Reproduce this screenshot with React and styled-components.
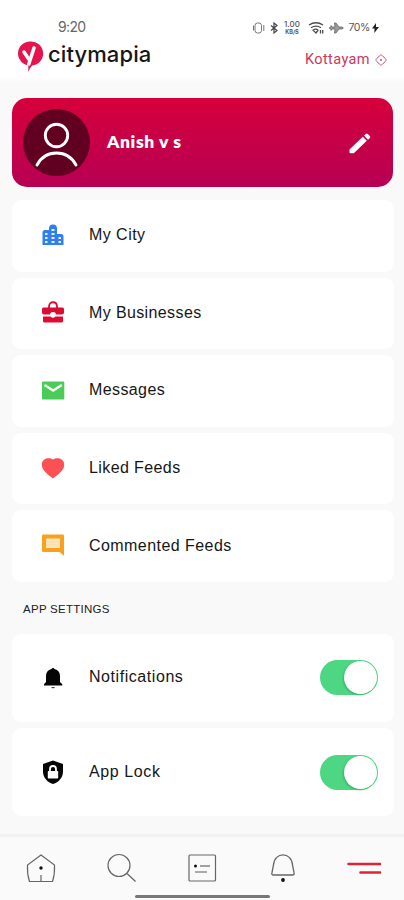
import React from "react";
import styled, { createGlobalStyle } from "styled-components";

const GlobalStyle = createGlobalStyle`
  * { box-sizing: border-box; }
  body { margin: 0; background: #f9f9f9; font-family: "Liberation Sans", Arial, sans-serif; color: #161616; }
  svg { display: block; overflow: visible; flex: none; }
`;

const Screen = styled.div`
  width: 404px;
  height: 900px;
  display: flex;
  flex-direction: column;
  background: #f9f9f9;
  overflow: hidden;
`;

const Header = styled.header`
  height: 83px;
  flex: none;
  background: linear-gradient(#fff 75px, #f9f9f9);
`;

const StatusBar = styled.div`
  height: 39px;
  padding: 16px 25px 0 58px;
  display: flex;
  justify-content: space-between;
`;

const Clock = styled.span`
  font: 14px/22px Inter, sans-serif;
  letter-spacing: -0.65px;
  color: #666;
`;

const StatusIcons = styled.div`
  height: 23px;
  display: flex;
  align-items: center;
`;

const NetSpeed = styled.div`
  width: 19px;
  margin: 0 7px 0 3px;
  display: flex;
  flex-direction: column;
  align-items: center;
  font-family: Inter, sans-serif;
  color: #555;
`;

const SpeedValue = styled.span`
  font-size: 8px;
  line-height: 10px;
  font-weight: 500;
`;

const SpeedUnit = styled.span`
  font-size: 5.5px;
  line-height: 7px;
  font-weight: 700;
`;

const Battery = styled.span`
  margin: 0 2px 0 3px;
  font: 10.5px/22px Inter, sans-serif;
  letter-spacing: -0.4px;
  color: #555;
`;

const BrandBar = styled.div`
  height: 38px;
  padding: 0 17px;
  display: flex;
  align-items: flex-start;
`;

const BrandName = styled.span`
  margin: 0 0 0 5px;
  font: 500 22px/30px Inter, sans-serif;
  letter-spacing: 0.1px;
  color: #171717;
`;

const Place = styled.div`
  margin-left: auto;
  padding-top: 11px;
  display: flex;
  align-items: center;
  gap: 5px;
  font: 14.5px/20px Roboto, sans-serif;
  letter-spacing: 0.4px;
  color: #c8385c;
`;

const Profile = styled.section`
  height: 89px;
  flex: none;
  margin: 15px 11px 0 12px;
  padding: 0 21px 0 11px;
  display: flex;
  align-items: center;
  border-radius: 15px;
  background: linear-gradient(#d6003b, #b70054);
`;

const Avatar = styled.div`
  width: 67px;
  height: 67px;
  border-radius: 50%;
  background: #610020;
`;

const UserName = styled.strong`
  flex: 1;
  margin: 0 0 2px 17px;
  font: 800 17.5px/22px Lato, sans-serif;
  letter-spacing: 0.6px;
  color: #fff;
`;

const List = styled.section`
  margin: ${(p) => p.$top}px 10px 0 12px;
  display: flex;
  flex-direction: column;
  gap: ${(p) => p.$gap}px;
`;

const Row = styled.div`
  height: ${(p) => p.$height}px;
  flex: none;
  padding: 0 16px 0 29px;
  display: flex;
  align-items: center;
  border-radius: 9px;
  background: #fff;
`;

const RowLabel = styled.span`
  flex: 1;
  margin: 0 0 1px 24px;
  font-size: 16px;
  line-height: 22px;
  letter-spacing: ${(p) => p.$spacing}px;
`;

const SectionTitle = styled.h2`
  margin: 19px 0 0 23px;
  height: 19px;
  font-size: 11.5px;
  line-height: 17px;
  font-weight: 400;
  letter-spacing: 0.27px;
  color: #222;
`;

const Toggle = styled.div`
  width: 58px;
  height: 35px;
  padding: 1px;
  display: flex;
  justify-content: flex-end;
  border-radius: 18px;
  background: #4dd783;
`;

const Knob = styled.div`
  width: 33px;
  height: 33px;
  border-radius: 50%;
  background: #fff;
  box-shadow: -1px 1px 2px #259e5499;
`;

const Footer = styled.footer`
  margin-top: auto;
  height: 66px;
  flex: none;
  border-top: 3px solid #f2f2f2;
  background: #fafafa;
`;

const Tabs = styled.nav`
  height: 57px;
  padding: 4px 22px 0 25px;
  display: flex;
  align-items: center;
  justify-content: space-between;
`;

const HomeBar = styled.div`
  width: 135px;
  height: 3px;
  margin: 1px 0 0 135px;
  border-radius: 2px;
  background: #777;
`;

const art = {
  city: (
    <g fill="#2f80ed">
      <path d="M1.500 21V8.500A2.500 2.500 0 0 1 4 6h4V4.500a4 4 0 0 1 8 0V10h4a2.500 2.500 0 0 1 2.500 2.500V21z" />
      <path fill="#e5f0ff" d="M4 9h2.500v2H4zm0 4h2.500v2H4zm0 4h2.500v2H4zm6.500-12h3v2h-3zm0 4h3v2h-3zm0 4h3v2h-3zm0 4h3v2h-3zM17.500 13H20v2h-2.500zm0 4H20v2h-2.500z" />
    </g>
  ),
  business: (
    <g fill="#db0b31">
      <path d="M8 7V5.500C8-.2 16-.2 16 5.500V7" fill="none" stroke="#db0b31" strokeWidth="1.800" />
      <path d="M2.500 6.500h19A1.500 1.500 0 0 1 23 8v3.500q0 2-2 2h-6a3 2.500 0 0 0-6 0H3q-2 0-2-2V8a1.500 1.500 0 0 1 1.500-1.500zM2 15.500h7.500q2.500 2.500 5 0H22v4.500a1.500 1.500 0 0 1-1.500 1.500h-17A1.500 1.500 0 0 1 2 20z" />
    </g>
  ),
  message: (
    <g>
      <rect x="1" y="2.500" width="22.300" height="18" rx="1" fill="#4bcb58" />
      <path d="m3.500 6 8.700 5.500L20.800 6" fill="none" stroke="#f3fff1" strokeWidth="2.400" />
    </g>
  ),
  heart: <path d="M12 21.500C7 17.500.8 13.200.8 7.700.8 1.100 8.600 0 12 2.500 15.400 0 23.200 1.100 23.200 7.700 23.200 13.200 17 17.500 12 21.500z" fill="#fd5054" />,
  comment: (
    <g>
      <path d="M2.300.5h19.400A1.300 1.300 0 0 1 23 1.800v20L18.500 18H2.300A1.300 1.300 0 0 1 1 16.700V1.800A1.300 1.300 0 0 1 2.300.5z" fill="#f7a11d" />
      <path d="M5 4.500h14V14H5z" fill="#ffe5bc" />
      <path d="M5 8h14M5 11h14" stroke="#f9d9a3" strokeWidth=".8" />
    </g>
  ),
  bell: (
    <g fill="#050505">
      <path d="M10.500 3a1.600 1.600 0 0 1 3 0c3.700 1 5.500 3.600 5.500 7v6l2.300 2.300V19.500H3v-1.200L5 16v-6c0-3.400 1.800-6 5.500-7z" />
      <path d="M10.200 21.200h3.800a2 1.600 0 0 1-3.800 0z" />
    </g>
  ),
  lock: (
    <g>
      <path d="M12 .5 22 4v7.500c0 6-4.300 10.800-10 12.500C6.300 22.300 2 17.500 2 11.500V4z" fill="#050505" />
      <rect x="6.800" y="11" width="10.400" height="7.500" rx=".7" fill="#fff" />
      <path d="M9 11.500V9a3 3 0 0 1 6 0v2.500" fill="none" stroke="#fff" strokeWidth="1.800" />
    </g>
  ),
};

const RowIcon = ({ name }) => (
  <svg width="24" height="24" viewBox="0 0 24 24">{art[name]}</svg>
);

const links = [
  ["city", "My City", 0.45],
  ["business", "My Businesses", 0.38],
  ["message", "Messages", 0.4],
  ["heart", "Liked Feeds", 0.4],
  ["comment", "Commented Feeds", 0.44],
];

const settings = [
  ["bell", "Notifications", 0.56],
  ["lock", "App Lock", 0.6],
];

const SystemIcons = () => (
  <StatusIcons>
    <svg width="13" height="14" viewBox="0 0 13 14" fill="none" stroke="#777">
      <rect x="2" y="2" width="6.500" height="10" rx="2.500" />
      <path d="M.5 4.500v5M10.800 4v6" />
    </svg>
    <svg width="13" height="12" viewBox="-4 0 13 12" fill="none" stroke="#444" strokeWidth="1.200">
      <path d="m1 3.500 6 5L4 11V1l3 2.500-6 5" />
    </svg>
    <NetSpeed>
      <SpeedValue>1.00</SpeedValue>
      <SpeedUnit>KB/S</SpeedUnit>
    </NetSpeed>
    <svg width="17" height="14" viewBox="0 0 17 14" fill="none" stroke="#4d4d4d" strokeWidth="1.300">
      <path d="M1 4q7-4.500 14 0M3 6.700q5-3 10 0M5 9.200q3-2 5 0L8 12zM12.500 9v3.500m2.200-3.500v3.500" />
    </svg>
    <svg width="20" height="14" viewBox="-4 0 20 14" fill="#999" stroke="#666" strokeWidth=".8">
      <path d="m2 4.500 1 1.500h3L5.500 2H7l3 4h3.500q1.500 1 0 2H10l-3 4H5.500L6 8H3L2 9.500V8L0 7l2-1z" />
    </svg>
    <Battery>70%</Battery>
    <svg width="7" height="10" viewBox="0 0 7 10" fill="#222"><path d="M4 0 0 5.500h2.500L2.300 10 7 4H4z" /></svg>
  </StatusIcons>
);

export default function App() {
  return (
    <>
      <GlobalStyle />
      <Screen>
        <Header>
          <StatusBar>
            <Clock>9:20</Clock>
            <SystemIcons />
          </StatusBar>
          <BrandBar>
            <svg width="26" height="34" viewBox="0 0 26 34">
              <path d="M13 2.500a12 12 0 0 0-12 12c0 5 3.200 9.500 8 11.200l2.300.7V33q1.700-4.500 3.800-6.400A12 12 0 1 0 13 2.500z" fill="#e5144f" />
              <path d="m7 13 4.500 6.700M17 9l-5.200 16" fill="none" stroke="#fff" strokeWidth="3.500" strokeLinecap="round" />
            </svg>
            <BrandName>citymapia</BrandName>
            <Place>
              Kottayam
              <svg width="12" height="12" viewBox="0 0 12 12" fill="none" stroke="#d0607c">
                <path d="M6 .5Q7 2 9 3q1 2 2.500 3Q10 7 9 9q-2 1-3 2.500Q5 10 3 9 2 7 .5 6 2 5 3 3q2-1 3-2.500z" />
                <circle cx="6" cy="6" r=".9" fill="#c8385c" stroke="none" />
              </svg>
            </Place>
          </BrandBar>
        </Header>

        <Profile>
          <Avatar>
            <svg width="67" height="67" viewBox="0 0 67 67" fill="none" stroke="#fff" strokeWidth="2.900" strokeLinecap="round">
              <circle cx="33.500" cy="26.500" r="11.200" />
              <path d="M14 56c8.500-16 30.500-16 39 0" />
            </svg>
          </Avatar>
          <UserName>Anish v s</UserName>
          <svg width="24" height="24" viewBox="0 0 24 24" fill="#fff">
            <path d="M1.500 18.500 14.800 5.700l4 4L5.800 22.200H2.500a1 1 0 0 1-1-1zM16 4.600l1.800-1.700a1.500 1.500 0 0 1 2 0L21.900 5a1.500 1.500 0 0 1 0 2L20 8.700z" />
          </svg>
        </Profile>

        <List $top={13} $gap={6.1}>
          {links.map(([icon, label, spacing]) => (
            <Row key={label} $height={71.5}>
              <RowIcon name={icon} />
              <RowLabel $spacing={spacing}>{label}</RowLabel>
            </Row>
          ))}
        </List>

        <SectionTitle>APP SETTINGS</SectionTitle>

        <List $top={14} $gap={6.5}>
          {settings.map(([icon, label, spacing]) => (
            <Row key={label} $height={88}>
              <RowIcon name={icon} />
              <RowLabel $spacing={spacing}>{label}</RowLabel>
              <Toggle><Knob /></Toggle>
            </Row>
          ))}
        </List>

        <Footer>
          <Tabs>
            <svg width="32" height="32" viewBox="0 0 32 32" fill="none" stroke="#666" strokeWidth="1.200">
              <path d="M16 3 2.500 13q-.5 9 2 16.500h23q2.500-7.500 2-16.500zM16 23v6.500" />
              <circle cx="16" cy="16" r="1.700" fill="#111" stroke="none" />
            </svg>
            <svg width="32" height="32" viewBox="0 0 32 32" fill="none" stroke="#666" strokeWidth="1.200">
              <circle cx="13" cy="13.500" r="11" /><path d="m21 21.500 8.500 8" />
            </svg>
            <svg width="32" height="32" viewBox="0 0 32 32" fill="none" stroke="#666" strokeWidth="1.200">
              <rect x="3" y="3" width="26.500" height="26" rx="1" />
              <path d="M14 14h10" /><path d="M9 20h12" stroke="#aaa" strokeWidth="2" />
              <circle cx="9.500" cy="14" r="1.500" fill="#111" stroke="none" />
            </svg>
            <svg width="32" height="32" viewBox="0 0 32 32" fill="none" stroke="#666" strokeWidth="1.300">
              <path d="M6.500 13C7.500-.5 24.500-.5 25.500 13l1.500 7.500q.8 2.500-1.500 2.500h-19Q4.200 23 5 20.500z" />
              <circle cx="16" cy="28" r="1.900" fill="#111" stroke="none" />
            </svg>
            <svg width="35" height="32" viewBox="0 0 35 32" fill="none" stroke="#e02330" strokeWidth="2.600" strokeLinecap="round">
              <path d="M1.500 12h31.500M13.500 20.500h19.500" />
            </svg>
          </Tabs>
          <HomeBar />
        </Footer>
      </Screen>
    </>
  );
}
